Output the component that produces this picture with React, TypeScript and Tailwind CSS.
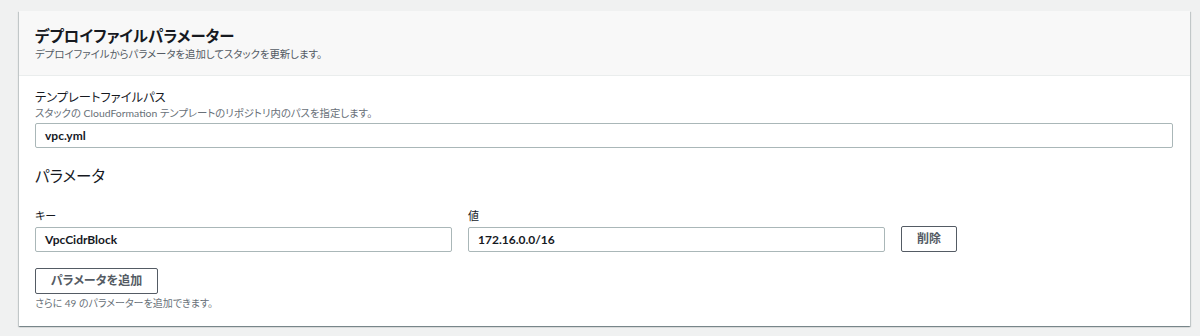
const font = {
  fontFamily: 'Lato, "Noto Sans CJK JP", sans-serif',
  fontFeatureSettings: '"palt"',
};

function TextBox({ value, className = "" }: { value: string; className?: string }) {
  return (
    <div
      className={`flex h-[25px] items-center rounded-[2px] border border-[#aab7b8] bg-white px-[9px] text-[12px] font-bold text-[#16191f] ${className}`}
    >
      {value}
    </div>
  );
}

function Button({ label, className = "" }: { label: string; className?: string }) {
  return (
    <button
      className={`flex h-[26px] items-center justify-center rounded-[2px] border border-[#545b64] bg-white text-[12px] font-bold text-[#545b64] ${className}`}
    >
      {label}
    </button>
  );
}

export default function App() {
  return (
    <div className="h-[336px] w-[1200px] overflow-hidden bg-[#f0f1f1] pt-[11px]" style={font}>
      <div className="ml-[19px] w-[1171px] bg-white shadow-[0_1px_1px_0_rgba(0,28,36,0.3),1px_1px_1px_0_rgba(0,28,36,0.15),-1px_1px_1px_0_rgba(0,28,36,0.15)]">
        <div className="flex h-[65px] flex-col justify-center border-b border-[#eaeded] bg-[#f8f8f8] px-[16px]">
          <h2 className="text-[15.4px] font-bold leading-[22px] text-[#16191f]">デプロイファイルパラメーター</h2>
          <p className="text-[10.4px] leading-[14px] text-[#545b64]">
            デプロイファイルからパラメータを追加してスタックを更新します。
          </p>
        </div>
        <div className="px-[16px] pb-[16px] pt-[13px]">
          <div className="text-[12.3px] leading-[18px] text-[#16191f]">テンプレートファイルパス</div>
          <div className="text-[10.4px] leading-[13px] text-[#687078]">
            スタックの CloudFormation テンプレートのリポジトリ内のパスを指定します。
          </div>
          <TextBox value="vpc.yml" className="mt-[3px] w-[1138px]" />
          <h3 className="mt-[17px] text-[15.5px] leading-[22px] text-[#16191f]">パラメータ</h3>
          <div className="mt-[21px] flex items-end gap-[16px]">
            <div className="w-[417px]">
              <div className="text-[11px] leading-[16px] text-[#16191f]">キー</div>
              <TextBox value="VpcCidrBlock" className="mt-[3px]" />
            </div>
            <div className="w-[417px]">
              <div className="text-[11px] leading-[16px] text-[#16191f]">値</div>
              <TextBox value="172.16.0.0/16" className="mt-[3px]" />
            </div>
            <Button label="削除" className="w-[56px]" />
          </div>
          <Button label="パラメータを追加" className="mt-[16px] w-[123px]" />
          <div className="mt-[3px] text-[10px] leading-[13px] text-[#687078]">
            さらに 49 のパラメーターを追加できます。
          </div>
        </div>
      </div>
    </div>
  );
}
